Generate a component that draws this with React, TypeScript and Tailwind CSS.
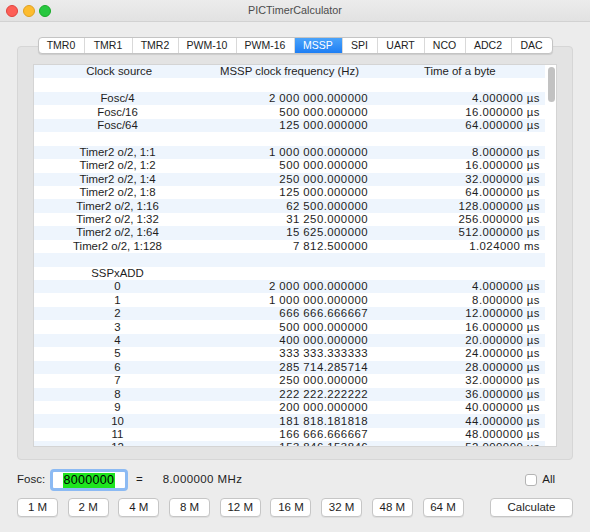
const tabs: [string, string][] = [
  ['TMR0', 'w-[45px]'],
  ['TMR1', 'w-[48px]'],
  ['TMR2', 'w-[46px]'],
  ['PWM-10', 'w-[58px]'],
  ['PWM-16', 'w-[58px]'],
  ['MSSP', 'w-[48px]'],
  ['SPI', 'w-[35px]'],
  ['UART', 'w-[47px]'],
  ['NCO', 'w-[41px]'],
  ['ADC2', 'w-[46px]'],
  ['DAC', 'w-[41px]'],
]

const rows: [string, string, string][] = [
  ['', '', ''],
  ['Fosc/4', '2 000 000.000000', '4.000000 µs'],
  ['Fosc/16', '500 000.000000', '16.000000 µs'],
  ['Fosc/64', '125 000.000000', '64.000000 µs'],
  ['', '', ''],
  ['Timer2 o/2, 1:1', '1 000 000.000000', '8.000000 µs'],
  ['Timer2 o/2, 1:2', '500 000.000000', '16.000000 µs'],
  ['Timer2 o/2, 1:4', '250 000.000000', '32.000000 µs'],
  ['Timer2 o/2, 1:8', '125 000.000000', '64.000000 µs'],
  ['Timer2 o/2, 1:16', '62 500.000000', '128.000000 µs'],
  ['Timer2 o/2, 1:32', '31 250.000000', '256.000000 µs'],
  ['Timer2 o/2, 1:64', '15 625.000000', '512.000000 µs'],
  ['Timer2 o/2, 1:128', '7 812.500000', '1.024000 ms'],
  ['', '', ''],
  ['SSPxADD', '', ''],
  ['0', '2 000 000.000000', '4.000000 µs'],
  ['1', '1 000 000.000000', '8.000000 µs'],
  ['2', '666 666.666667', '12.000000 µs'],
  ['3', '500 000.000000', '16.000000 µs'],
  ['4', '400 000.000000', '20.000000 µs'],
  ['5', '333 333.333333', '24.000000 µs'],
  ['6', '285 714.285714', '28.000000 µs'],
  ['7', '250 000.000000', '32.000000 µs'],
  ['8', '222 222.222222', '36.000000 µs'],
  ['9', '200 000.000000', '40.000000 µs'],
  ['10', '181 818.181818', '44.000000 µs'],
  ['11', '166 666.666667', '48.000000 µs'],
  ['12', '153 846.153846', '52.000000 µs'],
]

const presets = ['1 M', '2 M', '4 M', '8 M', '12 M', '16 M', '32 M', '48 M', '64 M']

function Row({ cells, odd }: { cells: [string, string, string]; odd: boolean }) {
  return (
    <div className={`flex h-[13.45px] shrink-0 items-center leading-[13px] ${odd ? 'bg-white' : 'bg-[#eef5fd]'}`}>
      <div className="flex-1 text-center">{cells[0]}</div>
      <div className="flex-1 pr-[5px] text-right tracking-[0.45px]">{cells[1]}</div>
      <div className="flex-1 pr-[5px] text-right tracking-[0.45px]">{cells[2]}</div>
    </div>
  )
}

export default function App() {
  return (
    <div
      className="relative h-[532px] w-[590px] overflow-hidden bg-[#ececec] text-[#1e1e1e]"
      style={{ fontFamily: '"Liberation Sans", Arial, sans-serif' }}
    >
      {/* title bar */}
      <div className="relative flex h-[22px] items-center border-b border-[#d2d2d2] bg-gradient-to-b from-[#ececec] to-[#e2e2e2]">
        <div className="flex gap-[4.5px] pl-[6px]">
          <span className="h-[12px] w-[12px] rounded-full border border-[#e0443e] bg-[#fd5f57]" />
          <span className="h-[12px] w-[12px] rounded-full border border-[#dea123] bg-[#fdbc2e]" />
          <span className="h-[12px] w-[12px] rounded-full border border-[#1aab29] bg-[#28c840]" />
        </div>
        <div className="absolute inset-x-0 top-0 flex h-[20px] items-center justify-center text-[10.8px] text-[#4c4c4c]">
          PICTimerCalculator
        </div>
      </div>

      <div className="px-[17px] pt-[15px]">
        {/* tabs */}
        <div className="relative z-10 flex justify-center">
          <div className="flex h-[17px] overflow-hidden rounded-[4px] border border-[#c4c4c4] bg-white shadow-[0_1px_1px_rgba(0,0,0,0.1)]">
            {tabs.map(([t, w], i) => (
              <div
                key={t}
                className={`${w} flex items-center justify-center text-[10.5px] ${i > 0 ? 'border-l border-[#d9d9d9]' : ''} ${
                  t === 'MSSP' ? 'bg-gradient-to-b from-[#4aa3fa] to-[#1d7ef4] text-white' : 'text-[#222]'
                }`}
              >
                {t}
              </div>
            ))}
          </div>
        </div>

        {/* group box */}
        <div className="-mt-[8px] rounded-[4px] border border-[#d6d6d6] bg-[#e3e3e3] px-[15px] pb-[12px] pt-[17px]">
          <div className="flex h-[383px] overflow-hidden border border-[#d4d4d4] bg-white text-[11.4px]">
            <div className="flex flex-1 flex-col">
              <div className="flex h-[13.45px] shrink-0 items-center bg-[#eef5fd] leading-[13px]">
                <div className="flex-1 text-center">Clock source</div>
                <div className="flex-1 text-center">MSSP clock frequency (Hz)</div>
                <div className="flex-1 text-center">Time of a byte</div>
              </div>
              {rows.map((r, i) => (
                <Row key={i} cells={r} odd={i % 2 === 0} />
              ))}
            </div>
            <div className="w-[11px] shrink-0 bg-white pl-[3px] pt-[2px]">
              <div className="h-[35px] w-[6.5px] rounded-full bg-[#c2c2c2]" />
            </div>
          </div>
        </div>

        {/* Fosc line */}
        <div className="mt-[9px] flex h-[22px] items-center text-[11.5px]">
          <div className="w-[33px]">Fosc:</div>
          <div className="flex h-[22px] w-[78px] items-center justify-center rounded-[4px] border-[3px] border-[#8cbaf3] bg-white">
            <span className="bg-[#1ee51e] px-[1px] text-[12.5px] leading-[15px] tracking-[0.3px] text-black">8000000</span>
          </div>
          <div className="ml-[8px]">=</div>
          <div className="ml-[20px] tracking-[0.4px]">8.000000 MHz</div>
          <div className="ml-auto mr-[18px] flex items-center gap-[5px]">
            <span className="h-[12px] w-[12px] rounded-[3px] border border-[#b4b4b4] bg-white" />
            <span>All</span>
          </div>
        </div>

        {/* buttons */}
        <div className="mt-[7px] flex h-[19px] items-center gap-[9.7px] text-[11.5px]">
          {presets.map((p) => (
            <div
              key={p}
              className="flex h-[19px] w-[41px] items-center justify-center rounded-[4px] border border-[#c6c6c6] bg-white shadow-[0_1px_0_rgba(0,0,0,0.06)]"
            >
              {p}
            </div>
          ))}
          <div className="ml-auto flex h-[19px] w-[83px] items-center justify-center rounded-[4px] border border-[#c6c6c6] bg-white shadow-[0_1px_0_rgba(0,0,0,0.06)]">
            Calculate
          </div>
        </div>
      </div>
    </div>
  )
}
